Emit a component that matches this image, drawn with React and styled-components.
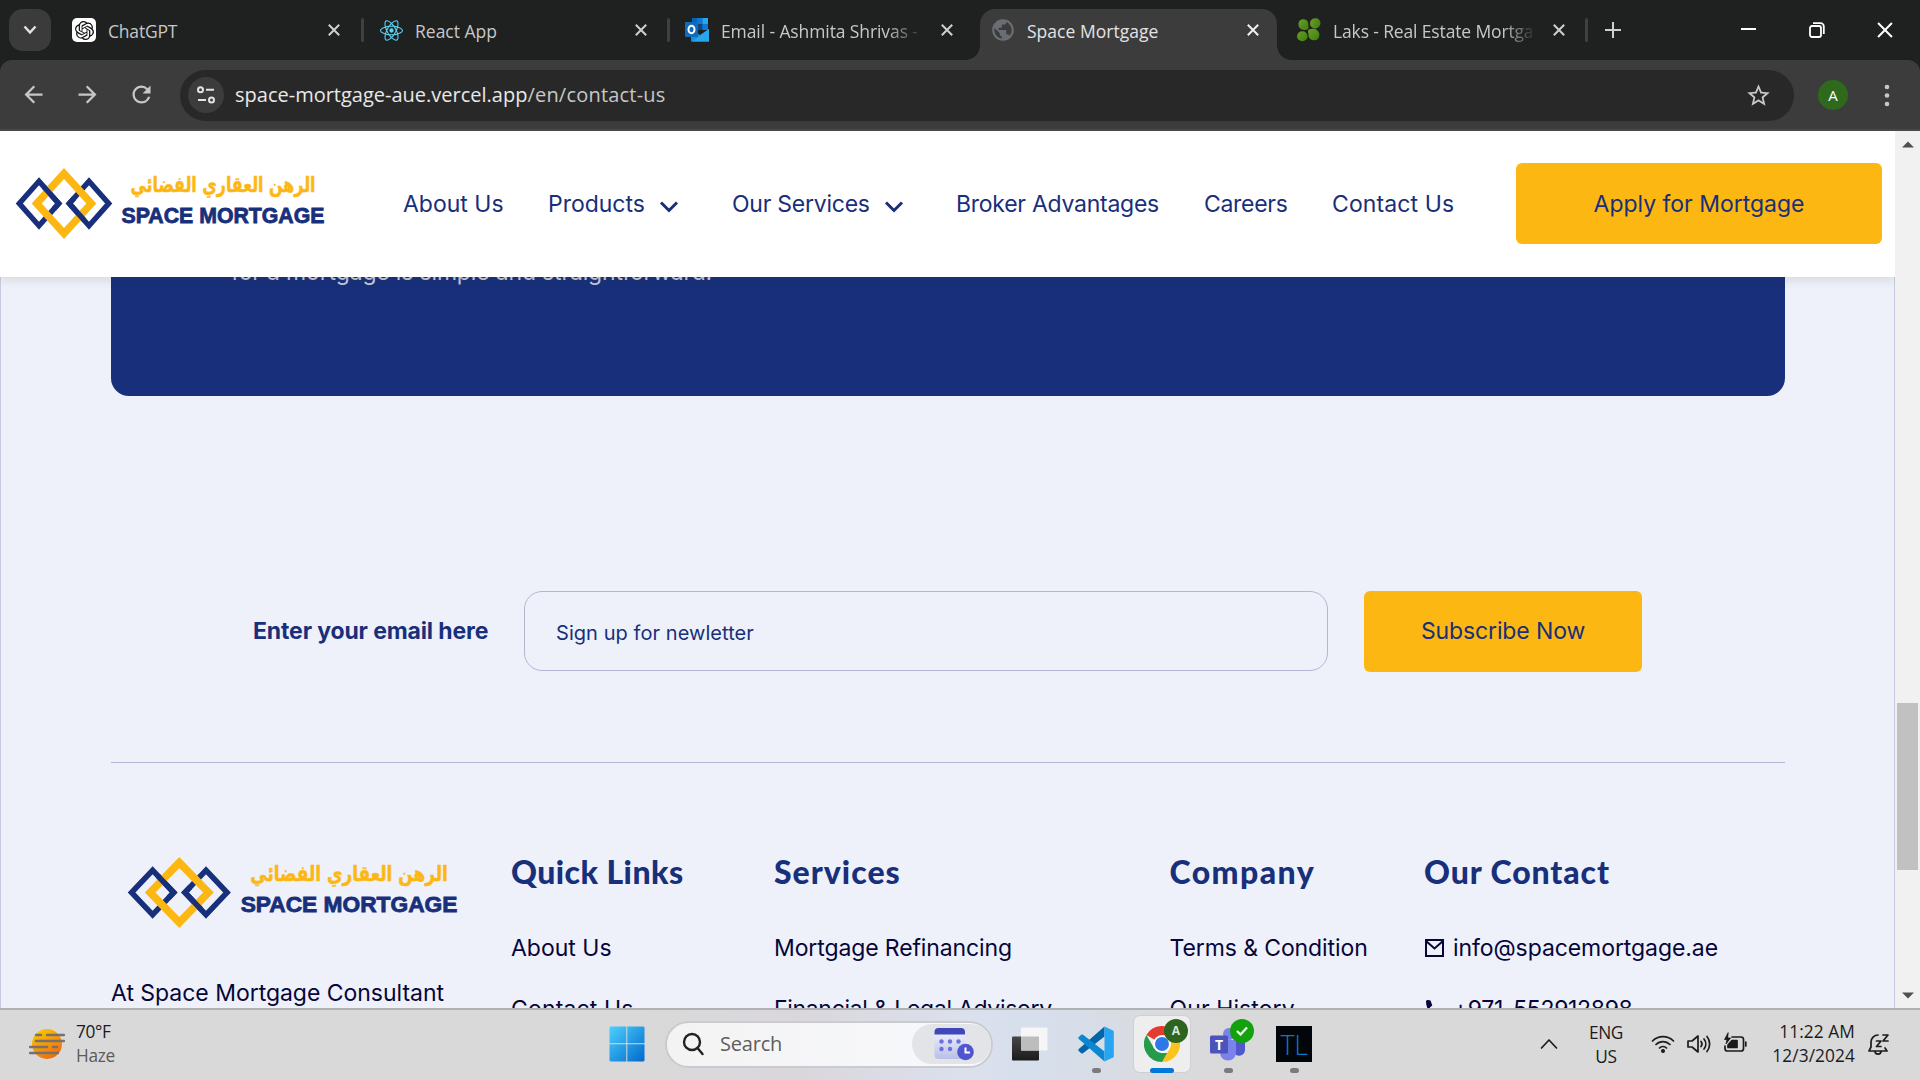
import React from 'react';
import styled, { createGlobalStyle, css } from 'styled-components';
import { MdArrowBack, MdArrowForward, MdRefresh, MdPublic, MdStarBorder } from 'react-icons/md';
import { SiOpenai, SiReact } from 'react-icons/si';

const navy = '#182f7b';
const amber = '#fdb713';

const GlobalStyle = createGlobalStyle`
  * { box-sizing: border-box; }
  body { margin: 0; overflow: hidden; background: #eef1f9; }
  svg { display: block; flex: none; }
`;

const Screen = styled.div`
  width: 1920px;
  height: 1080px;
  display: flex;
  flex-direction: column;
  overflow: hidden;
  font-family: Inter, 'Open Sans', sans-serif;
`;

/* ---------- Browser chrome ---------- */

const TabStrip = styled.div`
  height: 60px;
  flex: none;
  display: flex;
  align-items: center;
  background: #1f2120;
  padding-left: 9px;
  font-family: 'Open Sans', sans-serif;
`;

const TabSearch = styled.div`
  width: 42px;
  height: 42px;
  margin-right: 5px;
  border-radius: 14px;
  background: #3b3b3b;
  display: flex;
  align-items: center;
  justify-content: center;
`;

const Tab = styled.div`
  width: 306px;
  height: 60px;
  flex: none;
  display: flex;
  align-items: center;
  padding-left: ${(p) => p.$pad || 17}px;
  color: ${(p) => (p.$active ? '#e3e3e3' : '#c7c7c7')};
`;

const ActiveShape = styled.div`
  position: relative;
  width: 306px;
  height: 60px;
  flex: none;
  &::before,
  &::after {
    content: '';
    position: absolute;
    bottom: 0;
    width: 14px;
    height: 14px;
  }
  &::before {
    left: -8px;
    background: radial-gradient(circle at 0 0, transparent 13.5px, #3c3c3c 14px);
  }
  &::after {
    right: -11px;
    background: radial-gradient(circle at 100% 0, transparent 13.5px, #3c3c3c 14px);
  }
`;

const ActiveFill = styled.div`
  margin: 9px 3px 0 6px;
  height: 51px;
  background: #3c3c3c;
  border-radius: 15px 15px 0 0;
  & > ${Tab} {
    margin: 0 -3px 0 -6px;
    height: 42px;
  }
`;

const Favicon = styled.div`
  width: 24px;
  height: 24px;
  flex: none;
  display: flex;
  align-items: center;
  justify-content: center;
  border-radius: 5px;
  background: ${(p) => p.$bg || 'transparent'};
`;

const TabTitle = styled.div`
  width: 201px;
  margin: 2px 19px 0 12px;
  font-size: 17.5px;
  line-height: 26px;
  letter-spacing: ${(p) => p.$ls || 0}px;
  white-space: nowrap;
  overflow: hidden;
  ${(p) =>
    p.$fade &&
    css`
      mask-image: linear-gradient(90deg, #000 ${p.$fade}px, transparent 203px);
    `}
`;

const Separator = styled.div`
  width: 3px;
  height: 24px;
  margin: 0 -2px 0 auto;
  border-radius: 2px;
  background: #3f4140;
`;

const WindowControls = styled.div`
  margin-left: auto;
  width: 206px;
  display: flex;
  justify-content: space-between;
  align-items: center;
  padding: 0 27px 0 26px;
`;

const NewTab = styled.div`
  margin-left: 19px;
`;

const ToolbarBack = styled.div`
  flex: none;
  height: 71px;
  background: #1f2120;
`;

const Toolbar = styled.div`
  height: 71px;
  display: flex;
  align-items: center;
  padding: 0 0 0 20px;
  border-radius: 12px 12px 0 0;
  border-bottom: 2px solid #484848;
  background: #3c3c3c;
  color: #c7c7c7;
`;

const ToolIcon = styled.div`
  width: 54px;
`;

const Omnibox = styled.div`
  width: 1614px;
  height: 51px;
  margin-left: -2px;
  margin-top: 1px;
  border-radius: 26px;
  background: #282828;
  display: flex;
  align-items: center;
  padding: 0 22px 0 8px;
  font: 20px/30px 'Open Sans', sans-serif;
`;

const SiteInfo = styled.div`
  width: 36px;
  height: 36px;
  margin-right: 11px;
  border-radius: 50%;
  background: #3c3c3c;
  display: flex;
  align-items: center;
  justify-content: center;
`;

const Host = styled.span`
  color: #e8e8e8;
`;

const UrlPath = styled.span`
  flex: 1;
  color: #c7c7c7;
  letter-spacing: 0.2px;
`;

const Avatar = styled.div`
  width: 30px;
  height: 30px;
  margin: 1px 36px 0 24px;
  border-radius: 50%;
  background: #2f6a1c;
  color: #fff;
  font: 15px/30px 'Open Sans', sans-serif;
  text-align: center;
`;

/* ---------- Site ---------- */

const Viewport = styled.div`
  height: 877px;
  flex: none;
  display: flex;
`;

const Page = styled.div`
  width: 1895px;
  height: 877px;
  overflow: hidden;
  background: #eef1f9;
`;

const Header = styled.header`
  position: relative;
  z-index: 1;
  height: 146px;
  display: flex;
  align-items: center;
  padding: 0 13px 1px 15px;
  background: #fff;
  box-shadow: 0 2px 10px rgba(60, 64, 60, 0.16);
`;

const Nav = styled.nav`
  display: flex;
  align-items: center;
  margin: 1px 0 0 77px;
  color: ${navy};
  font-size: 23px;
  line-height: 30px;
`;

const NavItem = styled.a`
  display: flex;
  align-items: center;
  gap: 14px;
  width: ${(p) => p.$w}px;
  letter-spacing: ${(p) => p.$ls || 0}px;
  white-space: nowrap;
  & > svg {
    margin-top: 4px;
  }
`;

const Button = styled.button`
  width: ${(p) => p.$w}px;
  height: 81px;
  flex: none;
  padding: 0 0 ${(p) => (p.$push ? 0 : 1)}px;
  border: 0;
  border-radius: 6px;
  background: ${amber};
  color: ${navy};
  font: 23px/30px Inter, sans-serif;
  letter-spacing: ${(p) => p.$ls || 0}px;
  ${(p) => p.$push && 'margin-left: auto;'}
`;

const Body = styled.main`
  height: 731px;
  border: solid #c5cbe0;
  border-width: 0 1px;
  overflow: hidden;
`;

const Banner = styled.section`
  height: 119px;
  margin: 0 109px 0 110px;
  padding-left: 120px;
  border-radius: 0 0 18px 18px;
  background: ${navy};
  color: #c6ccdc;
  font-size: 23px;
  line-height: 36px;
  letter-spacing: -0.17px;
  overflow: hidden;
`;

const BannerText = styled.p`
  margin: -23px 0 0;
`;

const Newsletter = styled.form`
  display: flex;
  height: 81px;
  margin: 195px 252px 90px;
`;

const Label = styled.label`
  width: 271px;
  flex: none;
  color: ${navy};
  font-size: 23px;
  font-weight: 700;
  line-height: 81px;
  letter-spacing: -0.14px;
  white-space: nowrap;
`;

const EmailInput = styled.input`
  width: 804px;
  height: 80px;
  margin-right: 36px;
  padding: 3px 30px 0 31px;
  border: 1px solid #b1b7d3;
  border-radius: 18px;
  background: transparent;
  font: 20px/30px Inter, sans-serif;
  letter-spacing: 0.06px;
  color: ${navy};
  &::placeholder {
    color: ${navy};
    opacity: 1;
  }
`;

const Footer = styled.footer`
  margin: 0 109px 0 110px;
  padding-top: 88px;
  border-top: 1px solid #b1b7d3;
  display: grid;
  grid-template-columns: 400px 263px 395.5px 254.5px 1fr;
  color: #06063a;
`;

const About = styled.div`
  padding: 5px 0 0 16px;
`;

const AboutText = styled.p`
  margin: 46px 0 0 -16px;
  font-size: 23px;
  line-height: 36px;
  letter-spacing: -0.03px;
`;

const Heading = styled.h3`
  margin: 1px 0 25px;
  color: ${navy};
  font: 900 32px/40px Lato, sans-serif;
  letter-spacing: ${(p) => p.$ls || 0}px;
  white-space: nowrap;
`;

const FooterLink = styled.a`
  display: flex;
  align-items: center;
  gap: 8px;
  height: 61px;
  font-size: 23px;
  letter-spacing: ${(p) => p.$ls || 0}px;
  white-space: nowrap;
`;

const Scrollbar = styled.div`
  width: 25px;
  padding: 10px 2px 9px;
  background: #f1f1f1;
  display: flex;
  flex-direction: column;
  align-items: center;
`;

const Thumb = styled.div`
  width: 21px;
  height: 167px;
  margin: 555px 0 auto;
  background: #c1c1c1;
`;

/* ---------- Taskbar ---------- */

const Taskbar = styled.div`
  height: 72px;
  flex: none;
  display: flex;
  align-items: center;
  border-top: 2px solid #b0b1b3;
  background: linear-gradient(90deg, #d9d9d9 0 640px, #dad7dc 800px, #dbe0ec 960px, #d7dfec 1040px, #d9dadc 1180px, #d9d9d9 1260px);
  color: #1b1b1b;
  font: 17.3px/24px 'Open Sans', sans-serif;
`;

const Weather = styled.div`
  display: flex;
  align-items: center;
  gap: 11px;
  width: 580px;
  padding: 0 0 2px 29px;
`;

const Muted = styled.div`
  color: #5b5b5b;
`;

const Lines = styled.div`
  letter-spacing: ${(p) => p.$ls || -0.35}px;
`;

const SearchPill = styled.div`
  width: 328px;
  height: 47px;
  margin: 0 0 2px 10px;
  border: 2px solid #c9cbd0;
  border-radius: 24px;
  background: linear-gradient(90deg, #f3f3f3, #f8f9fd);
  display: flex;
  align-items: center;
  justify-content: space-between;
  padding-left: 15px;
  color: #5d5d5d;
  font-size: 20px;
`;

const SearchHint = styled.span`
  flex: 1;
  margin-left: 16px;
  letter-spacing: -0.2px;
`;

const SearchBadge = styled.div`
  width: 79px;
  height: 40px;
  border-radius: 20px;
  background: #e2e4e8;
  display: flex;
  align-items: center;
  justify-content: center;
  padding-left: 4px;
`;

const AppSlot = styled.div`
  position: relative;
  width: 56px;
  height: 56px;
  margin-left: ${(p) => p.$gap || 0}px;
  margin-bottom: 2px;
  border-radius: 6px;
  display: flex;
  align-items: center;
  justify-content: center;
  ${(p) => p.$active && 'background: #eeeeef; box-shadow: 0 0 0 1px #d0d0d2;'}
  &::after {
    content: '';
    position: absolute;
    bottom: -1px;
    left: ${(p) => (p.$active ? 16 : 23.5)}px;
    width: ${(p) => (p.$active ? 24 : 9)}px;
    height: 5px;
    border-radius: 3px;
    background: ${(p) => (p.$active ? '#0078d7' : p.$running ? '#7b7b7d' : 'transparent')};
  }
`;

const Badge = styled.div`
  position: absolute;
  top: 3px;
  right: 2px;
  width: 24px;
  height: 24px;
  border-radius: 50%;
  background: ${(p) => p.$color};
  color: #d9e8d2;
  font: 700 12px/24px 'Open Sans', sans-serif;
  display: flex;
  align-items: center;
  justify-content: center;
`;

const Terminal = styled.div`
  width: 36px;
  height: 36px;
  background: #02060b;
  color: #0a78c4;
  font: 300 27px/37px 'Open Sans', sans-serif;
  letter-spacing: -0.5px;
  text-align: center;
`;

const Tray = styled.div`
  margin-left: auto;
  display: flex;
  align-items: center;
  padding: 0 30px 2px 0;
`;

const Language = styled(Lines)`
  width: 36px;
  margin: 2px 27px 0 30px;
  text-align: center;
`;

const TrayIcons = styled.div`
  display: flex;
  gap: 12px;
`;

const Clock = styled(Lines)`
  width: 108px;
  margin-right: 12px;
  text-align: right;
`;

/* ---------- Drawings ---------- */

const Logo = ({ width }) => (
  <svg width={width} height="73" viewBox="15 167 311 73" preserveAspectRatio="none">
    <g fill="none" strokeMiterlimit="10">
      <path d="M39 181.3 58.7 203.5 39 225.7 19.3 203.5Z M89 181.3 108.7 203.5 89 225.7 69.3 203.5Z" stroke={navy} strokeWidth="5.4" />
      <path d="M64 173.6 91.3 203.5 64 233.4 36.7 203.5Z" stroke={amber} strokeWidth="7.4" />
      <path d="M44 187 58.7 203.5 54 208.8 M74 198.2 69.3 203.5 84 220" stroke={navy} strokeWidth="5.4" />
    </g>
    <text x="315.5" y="163.5" transform="translate(0 28.5)" direction="rtl" fill={amber} stroke={amber} strokeWidth="0.5" fontSize="21.5" fontWeight="700" fontFamily="'DejaVu Sans', sans-serif" textLength="185" lengthAdjust="spacingAndGlyphs">الرهن العقاري الفضائي</text>
    <text x="121.5" y="222.6" fill={navy} stroke={navy} strokeWidth="0.8" fontSize="21.5" fontWeight="700" fontFamily="'Liberation Sans', sans-serif" textLength="203" lengthAdjust="spacingAndGlyphs">SPACE MORTGAGE</text>
  </svg>
);

const Cross = ({ size = 12, color = '#d0d0d0', w = 2 }) => (
  <svg width={size} height={size} viewBox="0 0 12 12" stroke={color} strokeWidth={w}>
    <path d="M.8.8 11.2 11.2M11.2.8.8 11.2" />
  </svg>
);

const Chevron = () => (
  <svg width="20" height="13" viewBox="0 0 20 13" fill="none" stroke={navy} strokeWidth="3">
    <path d="M2 2.5 10 10.5 18 2.5" />
  </svg>
);

const OutlookIcon = () => (
  <svg width="24" height="26" viewBox="0 0 24 26">
    <path d="M7 1h16v11H7z" fill="#0364b8" />
    <path d="M12 1h5.5v6H12z" fill="#0f78d4" />
    <path d="M17.5 1H23v6h-5.5z" fill="#28a8ea" />
    <path d="M12 7h5.5v6H12z" fill="#14447d" />
    <path d="M17.5 7H23v6h-5.5z" fill="#0f78d4" />
    <path d="M6 12l9 6 9-6v12.5H6z" fill="#1490df" />
    <path d="M24 12v12.5H7z" fill="#28a8ea" />
    <rect y="5" width="13" height="15" rx="1" fill="#0f6cbd" />
    <ellipse cx="6.5" cy="12.5" rx="3" ry="3.8" fill="none" stroke="#fff" strokeWidth="2" />
  </svg>
);

const CloverIcon = () => (
  <svg width="24" height="24" viewBox="0 0 25 25">
    <defs>
      <linearGradient id="leaf" x2="1" y2="1"><stop stopColor="#6a9f2b" /><stop offset="1" stopColor="#3f7d0c" /></linearGradient>
    </defs>
    <g fill="url(#leaf)">
      <path d="M1.5 6.500C1.500 3 4 1 7 1.200c3.500.3 4.800 2.500 4.800 5.500 0 2.500 1 4.300-1.300 5.300-2 .9-4.500.7-6-.2C2.500 10.500 1.500 9 1.500 6.500Z" />
      <ellipse cx="19" cy="5.500" rx="5.500" ry="5.300" transform="rotate(-30 19 5.500)" />
      <ellipse cx="5.500" cy="19" rx="5.500" ry="5.300" />
      <path d="M12 17.500c0-1.800-1.500-4.500.5-5.500 2.500-1.200 6.500-1 8.500.8 2 1.700 2.500 4 2.200 6-.5 3-2.500 4.600-5.700 4.400-3.800-.2-5.500-2.400-5.500-5.700Z" />
    </g>
  </svg>
);

const TuneIcon = () => (
  <svg width="20" height="20" viewBox="0 0 20 20" fill="none" stroke="#e3e3e3" strokeWidth="2">
    <circle cx="4.5" cy="4.800" r="2.500" /><path d="M10 4.800h8M2 15h8" /><circle cx="15.500" cy="15" r="2.500" />
  </svg>
);

const Triangle = ({ down }) => (
  <svg width="12" height="7" viewBox="0 0 12 7" fill="#505050">
    <path d={down ? 'M0 .5h12L6 6.5z' : 'M0 6.5h12L6 .5z'} />
  </svg>
);

const WeatherIcon = () => (
  <svg width="36" height="32" viewBox="0 0 36 32">
    <defs>
      <linearGradient id="sun" x1=".2" x2=".8" y2="1"><stop stopColor="#fcc803" /><stop offset="1" stopColor="#f0640c" /></linearGradient>
    </defs>
    <circle cx="18" cy="16" r="15" fill="url(#sun)" />
    <path d="M7 7h5M18 7h17M7 13h28M1 19h17M24 19h4M1 25h28" stroke="#76716b" strokeWidth="2.4" strokeLinecap="round" />
  </svg>
);

const WindowsIcon = () => (
  <svg width="36" height="36" viewBox="0 0 36 36">
    <defs>
      <linearGradient id="win" x2="1" y2="1"><stop stopColor="#4cd0ff" /><stop offset="1" stopColor="#0069cc" /></linearGradient>
    </defs>
    <path d="M1.500.5h15.800v16.800H.5V1.500ZM18.300.5h16.200l1 1v15.800H18.300ZM.5 18.300h16.800v17.200H1.500l-1-1ZM18.300 18.300h17.200v16.200l-1 1H18.300Z" fill="url(#win)" />
  </svg>
);

const CalendarIcon = () => (
  <svg width="40" height="34" viewBox="0 0 40 34">
    <defs>
      <linearGradient id="cal" x2="0" y2="1"><stop stopColor="#f6f6ff" /><stop offset="1" stopColor="#babfe8" /></linearGradient>
    </defs>
    <rect x=".5" y="1" width="30.5" height="31" rx="4" fill="url(#cal)" />
    <path d="M.5 7.500V5a4 4 0 0 1 4-4H27a4 4 0 0 1 4 4v2.500Z" fill="#4047b8" />
    <g fill="#6c72dc"><circle cx="7.500" cy="14.500" r="2.200" /><circle cx="16" cy="14.500" r="2.200" /><circle cx="24.500" cy="14.500" r="2.200" /><circle cx="7.500" cy="22" r="2.200" /><circle cx="16" cy="22" r="2.200" /></g>
    <circle cx="31.500" cy="25" r="8.300" fill="#4e55cf" />
    <path d="M31.500 20.500v5h4.500" stroke="#fff" strokeWidth="2" fill="none" />
  </svg>
);

const TaskViewIcon = () => (
  <svg width="36" height="34" viewBox="0 0 36 34">
    <defs>
      <linearGradient id="dark" x2="0" y2="1"><stop stopColor="#474746" /><stop offset="1" stopColor="#1b1b1b" /></linearGradient>
    </defs>
    <rect x="0" y="9.500" width="27" height="24" rx="1" fill="url(#dark)" />
    <rect x="9" y=".5" width="26.500" height="23" rx="1" fill="#f6f6f6" />
    <rect x="9" y="9.500" width="18" height="14" fill="#bdbdbd" />
  </svg>
);

const VsCodeIcon = () => (
  <svg width="36" height="36" viewBox="0 0 36 36">
    <path d="M26.500.5v10L5 27.200q-1 .6-1.800 0L.8 25q-1-1 0-2Z" fill="#0065a9" />
    <path d="M26.500 35.500v-10L5 8.800q-1-.6-1.800 0L.8 11q-1 1 0 2Z" fill="#0b86d0" />
    <path d="M26.500.5 35 4.500q.8.400.8 1.300v24.400q0 .9-.8 1.300l-8.500 4z" fill="#27a4f2" />
  </svg>
);

const ChromeIcon = () => (
  <svg width="36" height="36" viewBox="0 0 36 36">
    <path d="M18 18 2.400 9A18 18 0 0 1 33.600 9Z" fill="#e33b2e" />
    <path d="M18 9h15.600A18 18 0 0 1 18 36l7.800-13.500Z" fill="#fcc31e" />
    <path d="M2.400 9 10.200 22.500 18 27h5.200L18 36A18 18 0 0 1 2.400 9Z" fill="#259b4b" />
    <circle cx="18" cy="18" r="9" fill="#fff" />
    <circle cx="18" cy="18" r="7" fill="#2f78ea" />
  </svg>
);

const TeamsIcon = () => (
  <svg width="38" height="36" viewBox="0 0 38 36">
    <circle cx="20" cy="8" r="6" fill="#7b83eb" />
    <path d="M25 13h11v11a6 6 0 0 1-11 3Z" fill="#5059c9" />
    <path d="M11 14h16v12.500a8 8 0 0 1-16 0Z" fill="#7b83eb" />
    <rect x="1" y="9.500" width="18" height="18" rx="1.500" fill="#4b53bc" />
    <text x="10" y="23.500" textAnchor="middle" fill="#fff" fontSize="14" fontWeight="700" fontFamily="'Open Sans', sans-serif">T</text>
  </svg>
);

const TrayGlyph = ({ children, w = 24 }) => (
  <svg width={w} height="24" viewBox={`0 0 ${w} 24`} fill="none" stroke="#1b1b1b" strokeWidth="1.7" strokeLinecap="round" strokeLinejoin="round">
    {children}
  </svg>
);

/* ---------- Content ---------- */

const tabs = [
  { title: 'ChatGPT', ls: -0.2, pad: 16, icon: <Favicon $bg="#fff"><SiOpenai size={19} color="#111" /></Favicon>, line: true },
  { title: 'React App', ls: 0, icon: <Favicon><SiReact size={23} color="#5ed3f3" /></Favicon>, line: true },
  { title: 'Email - Ashmita Shrivas -', ls: -0.1, fade: 165, icon: <Favicon><OutlookIcon /></Favicon> },
  { title: 'Space Mortgage', ls: 0.02, active: true, icon: <Favicon><MdPublic size={26} color="#6a6e74" /></Favicon> },
  { title: 'Laks - Real Estate Mortgage', ls: -0.14, fade: 170, icon: <Favicon><CloverIcon /></Favicon>, line: true },
];

const navItems = [
  { text: 'About Us', w: 145, ls: 0 },
  { text: 'Products', w: 184, ls: -0.02, menu: true },
  { text: 'Our Services', w: 224, ls: -0.25, menu: true },
  { text: 'Broker Advantages', w: 248, ls: -0.26 },
  { text: 'Careers', w: 128, ls: -0.3 },
  { text: 'Contact Us', w: 130, ls: 0.12 },
];

const columns = [
  { head: 'Quick Links', hls: 0.45, links: [['About Us', 0], ['Contact Us', 0.15]] },
  { head: 'Services', hls: 1, links: [['Mortgage Refinancing', -0.12], ['Financial & Legal Advisory', -0.32]] },
  { head: 'Company', hls: 1.45, links: [['Terms & Condition', -0.1], ['Our History', 0.1]] },
];

function BrowserTab({ tab }) {
  const inner = (
    <Tab $active={tab.active} $pad={tab.pad}>
      {tab.icon}
      <TabTitle $ls={tab.ls} $fade={tab.fade}>{tab.title}</TabTitle>
      <Cross size={12} color={tab.active ? '#f0f0f0' : '#cfcfcf'} />
      {tab.line && <Separator />}
    </Tab>
  );
  return tab.active ? <ActiveShape><ActiveFill>{inner}</ActiveFill></ActiveShape> : inner;
}

export default function App() {
  return (
    <Screen>
      <GlobalStyle />
      <TabStrip>
        <TabSearch>
          <svg width="14" height="10" viewBox="0 0 14 10" fill="none" stroke="#e3e3e3" strokeWidth="2.5"><path d="M1.500 1.500 7 7.500 12.500 1.500" /></svg>
        </TabSearch>
        {tabs.map((t) => <BrowserTab key={t.title} tab={t} />)}
        <NewTab>
          <svg width="16" height="16" viewBox="0 0 16 16" stroke="#cfcfcf" strokeWidth="2"><path d="M8 0v16M0 8h16" /></svg>
        </NewTab>
        <WindowControls>
          <svg width="16" height="16" viewBox="0 0 16 16" stroke="#fff" strokeWidth="2"><path d="M1 7h15" /></svg>
          <svg width="16" height="16" viewBox="0 0 16 16" fill="none" stroke="#fff" strokeWidth="1.8"><rect x="1" y="4" width="11" height="11" rx="2" /><path d="M4 1.200h7.500a3.300 3.300 0 0 1 3.300 3.300V12" /></svg>
          <Cross size={16} color="#fff" w={1.5} />
        </WindowControls>
      </TabStrip>

      <ToolbarBack>
        <Toolbar>
          <ToolIcon><MdArrowBack size={27} /></ToolIcon>
          <ToolIcon><MdArrowForward size={27} /></ToolIcon>
          <ToolIcon><MdRefresh size={27} /></ToolIcon>
          <Omnibox>
            <SiteInfo><TuneIcon /></SiteInfo>
            <Host>space-mortgage-aue.vercel.app</Host>
            <UrlPath>/en/contact-us</UrlPath>
            <MdStarBorder size={27} />
          </Omnibox>
          <Avatar>A</Avatar>
          <svg width="6" height="24" viewBox="0 0 6 24" fill="#c7c7c7"><circle cx="3" cy="4" r="2.3" /><circle cx="3" cy="12.500" r="2.3" /><circle cx="3" cy="21" r="2.3" /></svg>
        </Toolbar>
      </ToolbarBack>

      <Viewport>
        <Page>
          <Header>
            <Logo width={311} />
            <Nav>
              {navItems.map((n) => (
                <NavItem key={n.text} $w={n.w} $ls={n.ls}>{n.text}{n.menu && <Chevron />}</NavItem>
              ))}
            </Nav>
            <Button $w={366} $ls={-0.02} $push>Apply for Mortgage</Button>
          </Header>
          <Body>
            <Banner><BannerText>for a mortgage is simple and straightforward.</BannerText></Banner>
            <Newsletter>
              <Label htmlFor="email">Enter your email here</Label>
              <EmailInput id="email" placeholder="Sign up for newletter" />
              <Button type="button" $w={278} $ls={-0.12}>Subscribe Now</Button>
            </Newsletter>
            <Footer>
              <About>
                <Logo width={332} />
                <AboutText>At Space Mortgage Consultant</AboutText>
              </About>
              {columns.map((c) => (
                <div key={c.head}>
                  <Heading $ls={c.hls}>{c.head}</Heading>
                  {c.links.map(([text, ls]) => <FooterLink key={text} $ls={ls}>{text}</FooterLink>)}
                </div>
              ))}
              <div>
                <Heading $ls={0.9}>Our Contact</Heading>
                <FooterLink $ls={-0.08}>
                  <svg width="21" height="18" viewBox="0 0 21 18" fill="none" stroke="#06063a" strokeWidth="2"><path d="M2 1h17v16H2zM2 2l8.500 7.500L19 2" /></svg>
                  info@spacemortgage.ae
                </FooterLink>
                <FooterLink $ls={-0.35}>
                  <svg width="21" height="20" viewBox="0 0 21 20" fill="#06063a"><path d="M2 2.500C2 1.500 3 .8 4 1l2.500.4 1.800 5.200-2.500 2A14 14 0 0 0 12 14.500l2-2.500 5 1.800.5 3c0 1.200-1 2-2.500 2C8.500 18.500 2 11 2 2.500Z" /></svg>
                  +971-552912898
                </FooterLink>
              </div>
            </Footer>
          </Body>
        </Page>
        <Scrollbar><Triangle /><Thumb /><Triangle down /></Scrollbar>
      </Viewport>

      <Taskbar>
        <Weather>
          <WeatherIcon />
          <Lines><div>70°F</div><Muted>Haze</Muted></Lines>
        </Weather>
        <AppSlot $gap={19}><WindowsIcon /></AppSlot>
        <SearchPill>
          <svg width="22" height="24" viewBox="0 0 22 24" fill="none" stroke="#222" strokeWidth="2.4" strokeLinecap="round"><circle cx="10" cy="10" r="8" /><path d="M15.500 16 20.500 22" /></svg>
          <SearchHint>Search</SearchHint>
          <SearchBadge><CalendarIcon /></SearchBadge>
        </SearchPill>
        <AppSlot $gap={9}><TaskViewIcon /></AppSlot>
        <AppSlot $gap={10} $running><VsCodeIcon /></AppSlot>
        <AppSlot $gap={10} $active>
          <ChromeIcon />
          <Badge $color="#2c6420">A</Badge>
        </AppSlot>
        <AppSlot $gap={10} $running>
          <TeamsIcon />
          <Badge $color="#13a10e">
            <svg width="12" height="10" viewBox="0 0 12 10" fill="none" stroke="#fff" strokeWidth="2.2"><path d="M1 5 4.500 8.500 11 1.500" /></svg>
          </Badge>
        </AppSlot>
        <AppSlot $gap={10} $running><Terminal>TL</Terminal></AppSlot>
        <Tray>
          <TrayGlyph w={18}><path d="M1.500 16 9 8l7.500 8" /></TrayGlyph>
          <Language><div>ENG</div><div>US</div></Language>
          <TrayIcons>
            <TrayGlyph>
              <path d="M1.500 9a15 15 0 0 1 21 0M5 12.500a10 10 0 0 1 14 0M8.500 16a5 5 0 0 1 7 0" /><circle cx="12" cy="19" r="1.200" fill="#1b1b1b" />
            </TrayGlyph>
            <TrayGlyph>
              <path d="M1 9h4l6-5v16l-6-5H1ZM14 9.500a4 4 0 0 1 0 5M17 7a8 8 0 0 1 0 10M20 4.500a12 12 0 0 1 0 15" />
            </TrayGlyph>
            <TrayGlyph>
              <path d="M9 5h9a2.500 2.500 0 0 1 2.500 2.500v9A2.500 2.500 0 0 1 18 19H4.500A2.500 2.500 0 0 1 2 16.500V14M22.800 10v4" />
              <path d="M9 8.500h5v7H5v-2.500Z" fill="#1b1b1b" /><path d="M5 1 1.500 7.500H4L3 12l4.500-6H5Z" fill="#1b1b1b" strokeWidth=".8" />
            </TrayGlyph>
          </TrayIcons>
          <Clock $ls={0.1}><div>11:22 AM</div><div>12/3/2024</div></Clock>
          <TrayGlyph w={23}>
            <path d="M11 3a7 7 0 0 0-7 7v5l-2 4h18l-2-3M8 19.500c0 3.500 6 3.500 6 0M16 3h5l-5 6h5M9.500 9h4.500l-4.500 5.500H14" />
          </TrayGlyph>
        </Tray>
      </Taskbar>
    </Screen>
  );
}
